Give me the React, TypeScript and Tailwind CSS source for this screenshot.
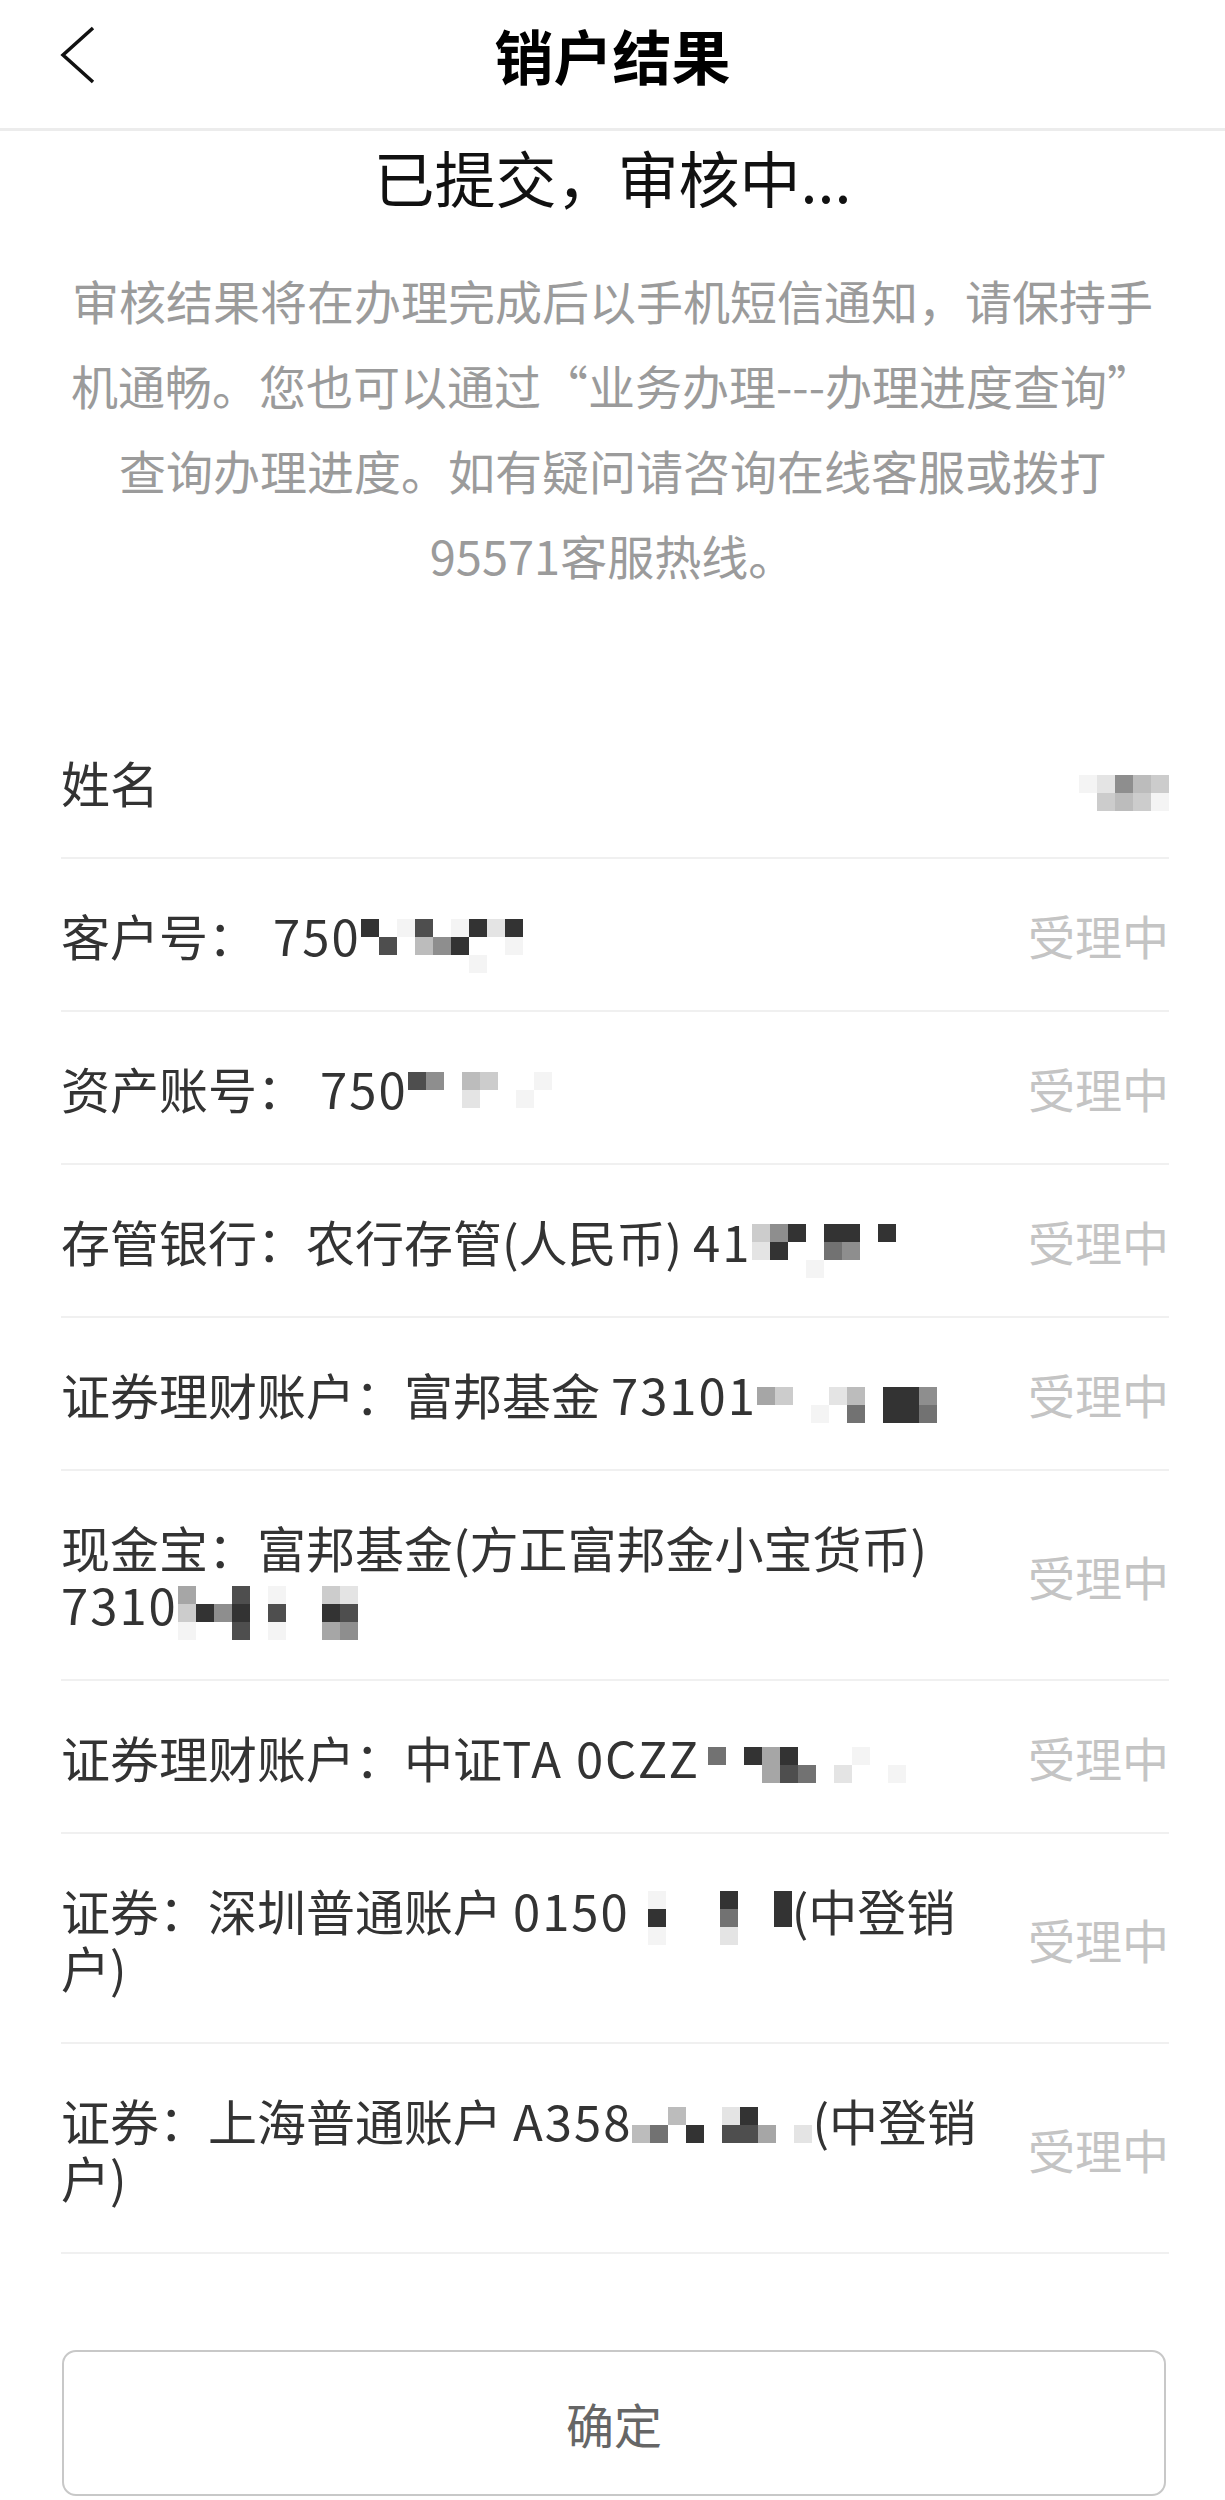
import { ReactNode } from "react";

// grey levels used by the redaction mosaics
const G: Record<string, string> = {
  "1": "#f4f4f4",
  "2": "#e4e4e4",
  "3": "#cccccc",
  "4": "#bcbcbc",
  "5": "#a6a6a6",
  "6": "#8e8e8e",
  "7": "#727272",
  "8": "#4e4e4e",
  "9": "#333333",
};

function Mosaic({ rows, className }: { rows: string[]; className?: string }) {
  return (
    <span className={"inline-flex flex-col align-top " + (className ?? "")}>
      {rows.map((r, i) => (
        <span key={i} className="flex">
          {r.split("").map((c, j) => (
            <span key={j} className="w-[18px] h-[18px]" style={{ background: G[c] ?? "transparent" }} />
          ))}
        </span>
      ))}
    </span>
  );
}

function Num({ children, className }: { children: ReactNode; className?: string }) {
  return <span className={"tracking-[2px] " + (className ?? "")}>{children}</span>;
}

function Row({ children, status = "受理中" }: { children: ReactNode; status?: ReactNode }) {
  return (
    <div className="flex items-center justify-between border-b-2 border-[#f0f0f0] py-[47px]">
      <div className="text-[49px] leading-[57px] text-[#333] whitespace-nowrap">{children}</div>
      <div className="shrink-0 text-[47px] leading-[57px] text-[#c4c4c4]">{status}</div>
    </div>
  );
}

export default function App() {
  return (
    <div className="w-[1225px] h-[2500px] bg-white font-['Noto_Sans_CJK_SC',sans-serif] overflow-hidden">
      {/* header */}
      <div className="h-[128px] border-b-[3px] border-[#ececec] box-content">
        <div className="relative h-[108px] flex items-center justify-center">
          <svg className="absolute left-[58px] top-[26px]" width="40" height="58" viewBox="0 0 40 58" fill="none">
            <path d="M35 2 L5 29 L35 56" stroke="#111" strokeWidth="3.5" strokeLinejoin="miter" />
          </svg>
          <div className="text-[59px] font-bold text-black leading-none">销户结果</div>
        </div>
      </div>

      <div className="rounded-t-[16px]">
        <div className="pt-[6px] text-center text-[61px] leading-[80px] text-[#111]">已提交，审核中...</div>

        <div className="mt-[40px] text-center text-[47px] leading-[85px] text-[#9b9b9b]">
          <div className="whitespace-nowrap">审核结果将在办理完成后以手机短信通知，请保持手</div>
          <div className="whitespace-nowrap">机通畅。您也可以通过“业务办理---办理进度查询”</div>
          <div className="whitespace-nowrap">查询办理进度。如有疑问请咨询在线客服或拨打</div>
          <div className="whitespace-nowrap">95571客服热线。</div>
        </div>

        <div className="mt-[109px] ml-[61px] mr-[56px]">
          <Row status={<Mosaic className="translate-y-[22px]" rows={["12643", ".3431"]} />}>姓名</Row>
          <Row>
            客户号：<Num className="ml-[16px]">750</Num>
            <Mosaic className="translate-y-[13px]" rows={["9.18.1929", ".8.469..1", "......1.."]} />
          </Row>
          <Row>
            资产账号：<Num className="ml-[14px]">750</Num>
            <Mosaic className="translate-y-[13px]" rows={["86.43..1", "...2..1."]} />
          </Row>
          <Row>
            存管银行：农行存管(人民币) <Num>41</Num>
            <Mosaic className="translate-y-[12px]" rows={["369.99.9", "29..76..", "...1...."]} />
          </Row>
          <Row>
            证券理财账户：富邦基金 <Num>73101</Num>
            <Mosaic className="translate-y-[22px]" rows={["53..24.996", "...1.7.997"]} />
          </Row>
          <Row>
            现金宝：富邦基金(方正富邦金小宝货币)
            <br />
            <Num>7310</Num>
            <Mosaic className="translate-y-[11px]" rows={["5..8.1..32", "3969.8..98", "1..8.1..56"]} />
          </Row>
          <Row>
            证券理财账户：中证<Num>TA 0CZZ</Num>
            <Mosaic className="translate-y-[19px] ml-[8px]" rows={["7.959...1..", "...587.2..1"]} />
          </Row>
          <Row>
            证券：深圳普通账户 <Num>0150</Num>
            <Mosaic className="translate-y-[10px]" rows={[".1...9..9", ".9...7..9", ".1...2..."]} />
            (中登销
            <br />
            户)
          </Row>
          <Row>
            证券：上海普通账户 <Num>A358</Num>
            <Mosaic className="translate-y-[16px]" rows={["..4..29...", "47.9.885.2"]} />
            (中登销
            <br />
            户)
          </Row>
        </div>

        <div className="mt-[96px] ml-[62px] mr-[59px] h-[146px] border-2 border-[#c8c8c8] rounded-[14px] flex items-center justify-center text-[48px] text-[#666]">
          确定
        </div>
      </div>
    </div>
  );
}
